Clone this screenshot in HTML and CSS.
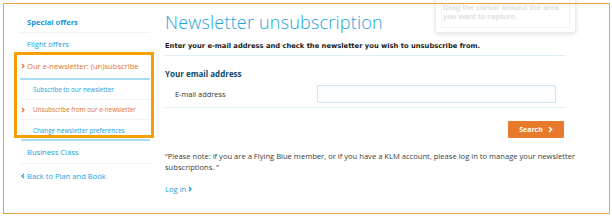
FILE: index.html
```html
<!DOCTYPE html>
<html lang="en">
<head>
<meta charset="utf-8">
<title>Newsletter unsubscription</title>
<link rel="stylesheet" href="styles.css">
</head>
<body>
<div class="capture">
  <div class="capture-inner">Drag the cursor around the area you want to capture.</div>
</div>
<div class="frame">
  <aside class="side">
    <ul class="nav">
      <li class="item strong sep">Special offers</li>
      <li class="item flight">Flight offers</li>
    </ul>
    <div class="hl">
      <div class="item active"><svg class="chev" viewBox="0 0 4 6" width="4" height="6"><polyline points="1,1 3,3 1,5" fill="none" stroke="#e4702a" stroke-width="1.2"/></svg>Our e-newsletter: (un)subscribe</div>
      <ul class="sub">
        <li class="sub-item sep">Subscribe to our newsletter</li>
        <li class="sub-item sep cur"><svg class="chev" viewBox="0 0 4 6" width="4" height="6"><polyline points="1,1 3,3 1,5" fill="none" stroke="#e4702a" stroke-width="1.2"/></svg>Unsubscribe from our e-newsletter</li>
        <li class="sub-item last">Change newsletter preferences</li>
      </ul>
    </div>
    <div class="blue-line"></div>
    <ul class="nav">
      <li class="item sep biz">Business Class</li>
      <li class="item back"><svg class="chev back-chev" viewBox="0 0 4 6" width="4" height="6"><polyline points="3,1 1,3 3,5" fill="none" stroke="#0a9bd8" stroke-width="1.2"/></svg>Back to Plan and Book</li>
    </ul>
  </aside>
  <main class="main">
    <h1 class="title">Newsletter unsubscription</h1>
    <p class="intro">Enter your e-mail address and check the newsletter you wish to unsubscribe from.</p>
    <section class="form">
      <h2 class="form-title">Your email address</h2>
      <div class="field">
        <label class="label" for="email">E-mail address</label>
        <input class="input" id="email" type="text">
      </div>
    </section>
    <div class="actions">
      <button class="btn" type="button">Search <svg class="btn-chev" viewBox="0 0 5 7" width="5" height="7"><polyline points="1,1 3.5,3.5 1,6" fill="none" stroke="#fff" stroke-width="1.6"/></svg></button>
    </div>
    <p class="note">“Please note: if you are a Flying Blue member, or if you have a KLM account, please log in to manage your newsletter subscriptions. ”</p>
    <a class="login" href="#">Log in <svg class="login-chev" viewBox="0 0 4 6" width="4" height="6"><polyline points="1,1 3,3 1,5" fill="none" stroke="#0a9bd8" stroke-width="1.3"/></svg></a>
  </main>
</div>
</body>
</html>
```
FILE: styles.css
```css
html, body {
  margin: 0;
  padding: 0;
  background: #fff;
}
body {
  font-family: "Open Sans", "Lato", sans-serif;
  width: 612px;
  height: 217px;
  overflow: hidden;
  position: relative;
}
ul {
  list-style: none;
  margin: 0;
  padding: 0;
}
.frame {
  position: relative;
  z-index: 1;
  margin: 3px 0 0 3px;
  width: 605px;
  height: 209px;
  border: 1px solid #e9a53c;
  display: flex;
  align-items: flex-start;
}
.capture {
  position: absolute;
  z-index: 0;
  left: 435px;
  top: -4px;
  width: 141px;
  height: 37px;
  background: #fff;
  border: 1px solid #ececec;
  border-radius: 3px;
  box-shadow: 0 1px 4px rgba(0,0,0,0.12);
  box-sizing: border-box;
  padding: 4px 5px;
}
.capture-inner {
  height: 100%;
  box-sizing: border-box;
  border: 1px solid #f2f2f2;
  border-top: none;
  padding: 2px 0 0 1px;
  font-family: "Liberation Sans", Arial, sans-serif;
  font-weight: bold;
  font-size: 7.6px;
  line-height: 9px;
  color: #e0e0e0;
}

/* sidebar */
.side {
  width: 140px;
  margin-left: 10px;
  padding-top: 8px;
  flex: none;
}
.nav {
  margin: 0 4px 0 6px;
}
.item {
  font-size: 7.6px;
  color: #17a0dd;
  padding-left: 7px;
  white-space: nowrap;
}
.sep {
  border-bottom: 1px solid #edf4f8;
}
.strong {
  font-weight: bold;
  color: #0b97d6;
  height: 20px;
  line-height: 20px;
}
.flight {
  height: 19px;
  padding-top: 3px;
  box-sizing: border-box;
  line-height: 16px;
}
.hl {
  border: 3px solid #f5a000;
  padding: 0 1px 0 3px;
}
.active {
  color: #e4702a;
  height: 23px;
  line-height: 23px;
  border-bottom: 2px solid #a8dcf3;
  padding-left: 1px;
}
.chev {
  display: inline-block;
  vertical-align: middle;
  margin: -1px 2px 0 0;
}
.sub-item {
  font-size: 6.3px;
  color: #17a0dd;
  padding-left: 13px;
  height: 19px;
  line-height: 19px;
  white-space: nowrap;
}
.cur {
  color: #e4702a;
  padding-left: 1px;
}
.cur .chev {
  margin-right: 8px;
}
.last {
  height: 15px;
  box-sizing: border-box;
  padding-top: 6px;
  line-height: 9px;
}
.blue-line {
  margin: 1px 4px 0 7px;
  border-top: 2px solid #a8dcf3;
}
.biz {
  height: 22px;
  line-height: 22px;
}
.back {
  height: 24px;
  line-height: 24px;
  padding-left: 1px;
}
.back-chev {
  margin-right: 2px;
}

/* main */
.main {
  width: 400px;
  margin-left: 11px;
  padding-top: 6px;
  flex: none;
}
.title {
  margin: 0;
  font-weight: 300;
  font-size: 18px;
  line-height: 24px;
  color: #1ea3dc;
  letter-spacing: 0.2px;
}
.intro {
  margin: 6px 0 0;
  font-family: "DejaVu Sans", Verdana, sans-serif;
  font-weight: bold;
  font-size: 6.75px;
  line-height: 12px;
  color: #1a1a1a;
  padding-bottom: 3px;
  border-bottom: 1px solid #dcedf5;
}
.form {
  border-bottom: 1px solid #dcedf5;
  padding-bottom: 4px;
}
.form-title {
  margin: 12px 0 0;
  font-size: 8px;
  font-weight: bold;
  line-height: 12px;
  color: #0b4a6f;
}
.field {
  display: flex;
  align-items: center;
  margin-top: 5px;
}
.label {
  font-size: 7.4px;
  color: #333;
  width: 152px;
  padding-left: 10px;
  box-sizing: border-box;
}
.input {
  width: 239px;
  height: 18px;
  box-sizing: border-box;
  border: 1px solid #cfe6f2;
  border-radius: 2px;
  background: #fbfdfe;
  margin: 0;
  padding: 0;
}
.actions {
  display: flex;
  justify-content: flex-end;
  padding: 13px 1px 0 0;
}
.btn {
  width: 56px;
  height: 17px;
  background: #e87a2c;
  border: none;
  border-radius: 1px;
  color: #fff;
  font-family: "Open Sans", sans-serif;
  font-weight: bold;
  font-size: 7px;
  padding: 0;
  display: flex;
  align-items: center;
  justify-content: center;
  gap: 5px;
}
.note {
  margin: 13px 0 0;
  font-size: 7.6px;
  line-height: 10.5px;
  color: #3b3b3b;
  width: 420px;
}
.login {
  display: inline-block;
  margin-top: 12px;
  font-size: 7.6px;
  color: #17a0dd;
  text-decoration: none;
}
.login-chev {
  vertical-align: middle;
  margin: -1px 0 0 0;
}
```
